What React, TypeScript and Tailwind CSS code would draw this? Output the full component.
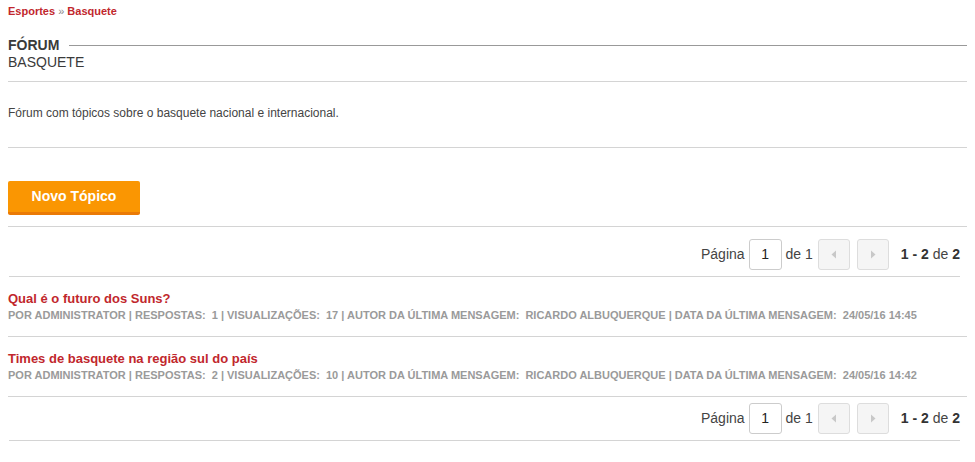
const topics = [
  {
    title: "Qual é o futuro dos Suns?",
    author: "ADMINISTRATOR",
    replies: 1,
    views: 17,
    lastAuthor: "RICARDO ALBUQUERQUE",
    lastDate: "24/05/16 14:45",
  },
  {
    title: "Times de basquete na região sul do país",
    author: "ADMINISTRATOR",
    replies: 2,
    views: 10,
    lastAuthor: "RICARDO ALBUQUERQUE",
    lastDate: "24/05/16 14:42",
  },
];

function Pagination({ top }: { top: string }) {
  return (
    <div className={`ml-px mr-[7px] flex items-center justify-end border-b border-[#d4d4d4] pb-[6px] ${top}`}>
      <span className="text-[14px] text-[#444]">Página</span>
      <div className="ml-[4px] flex h-[31px] w-[33px] items-center justify-center rounded-[3px] border border-[#ccc] text-[14px] text-[#222]">
        1
      </div>
      <span className="ml-[4px] text-[14px] text-[#444]">de 1</span>
      <div className="ml-[5px] flex h-[31px] w-[32px] items-center justify-center rounded-[3px] border border-[#ddd] bg-[#f5f5f5]">
        <svg width="6" height="9" viewBox="0 0 6 9">
          <path d="M5 0.5 L0.5 4.5 L5 8.5 Z" fill="#c8c8c8" />
        </svg>
      </div>
      <div className="ml-[7px] flex h-[31px] w-[32px] items-center justify-center rounded-[3px] border border-[#ddd] bg-[#f5f5f5]">
        <svg width="6" height="9" viewBox="0 0 6 9">
          <path d="M1 0.5 L5.5 4.5 L1 8.5 Z" fill="#c8c8c8" />
        </svg>
      </div>
      <span className="ml-[12px] text-[14px] text-[#444]">
        <b className="text-[#333]">1 - 2</b> de <b className="text-[#333]">2</b>
      </span>
    </div>
  );
}

export default function App() {
  return (
    <div className="min-h-[462px] bg-white px-2 font-['Liberation_Sans',Arial,sans-serif]">
      {/* Breadcrumb */}
      <div className="pt-[4px] text-[11px] font-bold leading-[14px] text-[#c1272d]">
        Esportes <span className="font-normal text-[#888]">»</span> Basquete
      </div>

      {/* Header */}
      <div className="mt-[19px] flex items-center">
        <h1 className="text-[14px] font-bold leading-[17px] text-[#3a3a3a]">FÓRUM</h1>
        <div className="ml-[10px] h-px flex-1 bg-[#999]" />
      </div>
      <div className="border-b border-[#d4d4d4] pb-[10px] text-[14px] leading-[17px] text-[#3a3a3a]">BASQUETE</div>

      <p className="mt-[24px] border-b border-[#d4d4d4] pb-[26px] text-[12px] leading-[15px] text-[#444]">
        Fórum com tópicos sobre o basquete nacional e internacional.
      </p>

      <div className="border-b border-[#d4d4d4] pt-[33px] pb-[11px]">
        <button className="h-[34px] w-[132px] rounded-[2px] border-b-[3px] border-[#ea7a06] bg-[#fa9602] text-[14px] font-bold text-white">
          Novo Tópico
        </button>
      </div>

      <Pagination top="pt-[12px]" />

      {topics.map((t) => (
        <div key={t.title} className="border-b border-[#d4d4d4] pt-[14px] pb-[14px]">
          <div className="text-[13px] font-bold leading-[16px] text-[#c1272d]">{t.title}</div>
          <div className="mt-px text-[11px] font-bold uppercase leading-[14px] text-[#9a9a9a]">
            POR {t.author} | RESPOSTAS: <span className="ml-[3px]">{t.replies}</span> | VISUALIZAÇÕES:{" "}
            <span className="ml-[3px]">{t.views}</span> | AUTOR DA ÚLTIMA MENSAGEM:{" "}
            <span className="ml-[3px]">{t.lastAuthor}</span> | DATA DA ÚLTIMA MENSAGEM:{" "}
            <span className="ml-[3px]">{t.lastDate}</span>
          </div>
        </div>
      ))}

      <Pagination top="pt-[6px]" />
    </div>
  );
}
